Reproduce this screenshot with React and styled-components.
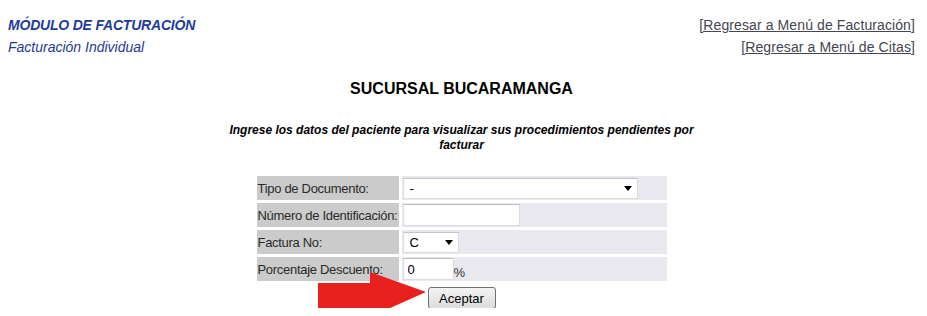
import React from "react";
import styled, { createGlobalStyle } from "styled-components";

const Global = createGlobalStyle`
  html { overflow: hidden; }
  html, body { padding: 0; background: #fff; }
  body { margin: 8px; font-family: "Liberation Sans", Arial, sans-serif; }
`;

const Page = styled.div`
  position: relative;
  width: 907px;
  height: 300px;
`;

const Header = styled.div`
  display: flex;
  justify-content: space-between;
  padding-top: 6px;
`;

const Col = styled.div`
  display: flex;
  flex-direction: column;
  align-items: ${(p) => (p.$right ? "flex-end" : "flex-start")};
`;

const ModuleTitle = styled.div`
  font-size: 14px;
  font-weight: bold;
  font-style: italic;
  letter-spacing: -0.2px;
  color: #1d3c9e;
  line-height: 22px;
`;

const SubTitle = styled.div`
  font-size: 14px;
  font-style: italic;
  color: #1f3a96;
  line-height: 22px;
`;

const Link = styled.a`
  font-size: 14px;
  letter-spacing: 0.1px;
  color: #45454f;
  text-decoration: underline;
  line-height: 22px;
  cursor: pointer;
`;

const Branch = styled.h2`
  margin: 21px 0 0;
  text-align: center;
  font-size: 16px;
  font-weight: bold;
  color: #000;
  line-height: 20px;
`;

const Instructions = styled.p`
  width: 480px;
  margin: 24px auto 0;
  text-align: center;
  font-size: 12px;
  font-weight: bold;
  font-style: italic;
  line-height: 15px;
  color: #000;
`;

const Form = styled.table`
  margin: 20px auto 0;
  border-spacing: 3px;
  width: 416px;
  table-layout: fixed;
  font-size: 13px;
  letter-spacing: -0.3px;
  color: #2a2a2a;
`;

const Label = styled.td`
  background: #cbcbcb;
  width: 142px;
  height: 24px;
  padding: 0 0 0 1px;
  white-space: nowrap;
  box-sizing: border-box;
`;

const Value = styled.td`
  background: #e9e8ee;
  height: 24px;
  padding: 0;
  box-sizing: border-box;
  white-space: nowrap;
`;

const SelectBox = styled.div`
  display: inline-flex;
  align-items: center;
  justify-content: space-between;
  width: ${(p) => p.$w}px;
  height: 21px;
  margin-left: 1px;
  box-sizing: border-box;
  background: #fff;
  border: 1px solid #dcdcdc;
  border-top-color: #c4c4c4;
  padding: 0 5px 0 6px;
  font-size: 13px;
  color: #000;
  vertical-align: middle;
`;

const Caret = styled.span`
  width: 0;
  height: 0;
  border-left: 4px solid transparent;
  border-right: 4px solid transparent;
  border-top: 5px solid #000;
`;

const TextInput = styled.input`
  width: ${(p) => p.$w}px;
  height: 22px;
  margin: 0 0 0 1px;
  box-sizing: border-box;
  border: 1px solid #dcdcdc;
  border-top-color: #bdbdbd;
  padding: 0 4px;
  font-family: "Liberation Sans", Arial, sans-serif;
  font-size: 13px;
  color: #000;
  outline: none;
  vertical-align: bottom;
`;

const Percent = styled.span`
  font-size: 13px;
  color: #333;
  margin-left: 0;
  vertical-align: bottom;
`;

const ButtonCell = styled.td`
  text-align: center;
  padding: 3px 0 0;
`;

const Button = styled.button`
  width: 68px;
  height: 22px;
  font-family: "Liberation Sans", Arial, sans-serif;
  font-size: 13px;
  color: #000;
  border: 1px solid #707070;
  border-radius: 3px;
  background: linear-gradient(#f4f4f4, #dcdcdc);
  padding: 0;
`;

const Arrow = styled.svg`
  position: absolute;
  left: 310px;
  top: 263px;
`;

export default function App() {
  return (
    <>
      <Global />
      <Page>
        <Header>
          <Col>
            <ModuleTitle>MÓDULO DE FACTURACIÓN</ModuleTitle>
            <SubTitle>Facturación Individual</SubTitle>
          </Col>
          <Col $right>
            <Link>[Regresar a Menú de Facturación]</Link>
            <Link>[Regresar a Menú de Citas]</Link>
          </Col>
        </Header>
        <Branch>SUCURSAL BUCARAMANGA</Branch>
        <Instructions>
          Ingrese los datos del paciente para visualizar sus procedimientos pendientes por facturar
        </Instructions>
        <Form>
          <tbody>
            <tr>
              <Label>Tipo de Documento:</Label>
              <Value>
                <SelectBox $w={235}>
                  <span>-</span>
                  <Caret />
                </SelectBox>
              </Value>
            </tr>
            <tr>
              <Label>Número de Identificación:</Label>
              <Value>
                <TextInput $w={117} />
              </Value>
            </tr>
            <tr>
              <Label>Factura No:</Label>
              <Value>
                <SelectBox $w={56}>
                  <span>C</span>
                  <Caret />
                </SelectBox>
              </Value>
            </tr>
            <tr>
              <Label>Porcentaje Descuento:</Label>
              <Value>
                <TextInput $w={51} defaultValue="0" />
                <Percent>%</Percent>
              </Value>
            </tr>
            <tr>
              <ButtonCell colSpan={2}>
                <Button>Aceptar</Button>
              </ButtonCell>
            </tr>
          </tbody>
        </Form>
        <Arrow width="110" height="48" viewBox="0 0 110 48">
          <polygon
            points="0,12 52,12 52,1 108,21 52,46 52,37 0,37"
            fill="#e8201e"
          />
        </Arrow>
      </Page>
    </>
  );
}
